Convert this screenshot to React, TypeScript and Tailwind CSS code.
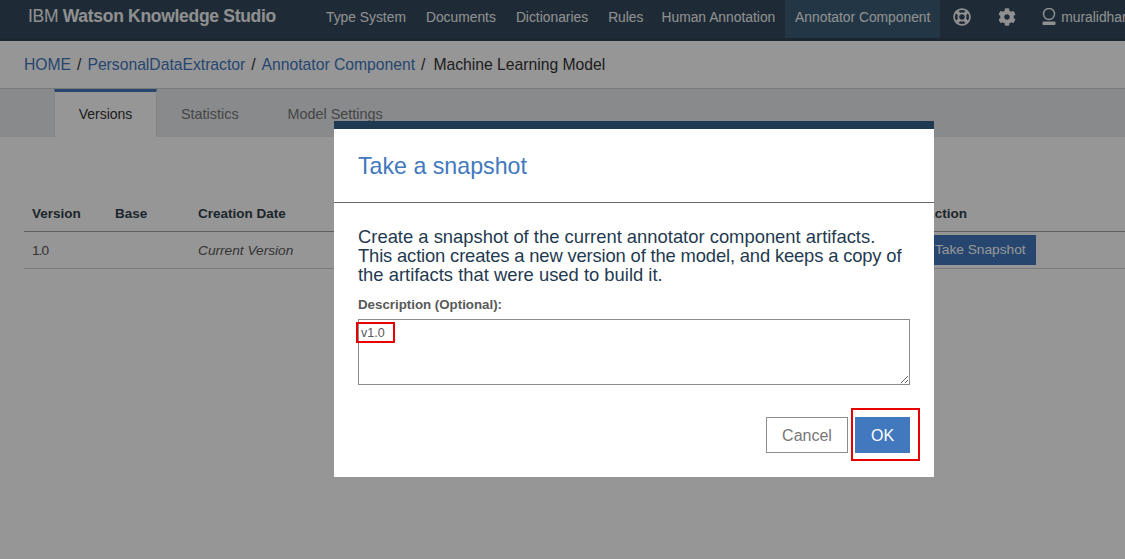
import { FaCog, FaRegLifeRing } from 'react-icons/fa';

const navItems = [
  { label: 'Type System', margin: 'mr-5' },
  { label: 'Documents', margin: 'mr-5' },
  { label: 'Dictionaries', margin: 'mr-5' },
  { label: 'Rules', margin: 'mr-[18px]' },
  { label: 'Human Annotation', margin: 'mr-5' },
];

const font = { fontFamily: '"Liberation Sans", Arial, sans-serif' };

function UserIcon() {
  return (
    <svg width="16" height="18" viewBox="0 0 16 18" fill="none" className="shrink-0">
      <circle cx="8" cy="6" r="5.5" stroke="currentColor" strokeWidth="1.4" />
      <rect x="1.5" y="13.5" width="13" height="3.5" rx="1" fill="currentColor" />
    </svg>
  );
}

export default function App() {
  return (
    <div className="relative h-[559px] w-[1125px] overflow-hidden bg-white" style={font}>
      {/* page behind the dialog */}
      <header className="flex h-[41px] items-start border-b-[3px] border-[#2e4250] bg-[#334a5c] pl-7 text-[#f5f5f5]">
        <div className="mt-[6px] w-[298px] shrink-0 text-[17.5px] leading-[20px] tracking-[-0.3px]">
          <span className="font-light">IBM </span>
          <span className="font-bold">Watson Knowledge Studio</span>
        </div>
        <nav className="flex h-[38px] shrink-0 items-center pb-1 text-[13.84px]">
          {navItems.map((item) => (
            <span key={item.label} className={`${item.margin} whitespace-nowrap`}>{item.label}</span>
          ))}
          <span className="-ml-[10px] flex h-[38px] w-[155px] items-center justify-center self-start whitespace-nowrap bg-[#3b5d78] pb-1">Annotator Component</span>
          <FaRegLifeRing size={18} className="ml-[13px] shrink-0" />
          <FaCog size={18} className="ml-[27px] shrink-0" />
          <span className="ml-[25px] flex items-center gap-1 whitespace-nowrap">
            <UserIcon />
            muralidhar
          </span>
        </nav>
      </header>

      <div className="flex h-[48px] items-center border-b border-[#d0d0d0] pl-6 text-[15.7px] text-[#333333]">
        <span className="text-[#4178be]">HOME</span>
        <span className="mx-[6px]">/</span>
        <span className="text-[#4178be]">PersonalDataExtractor</span>
        <span className="mx-[6px]">/</span>
        <span className="text-[#4178be]">Annotator Component</span>
        <span className="ml-[6px] mr-2">/</span>
        <span>Machine Learning Model</span>
      </div>

      <div className="flex h-[48px] bg-[#e8eaed] pl-[54px] text-[14.4px]">
        <div className="flex h-[48px] w-[103px] items-center justify-center border-x border-t-[3px] border-x-[#dfe1e4] border-t-[#4178be] bg-white text-[14px] text-[#333333]">Versions</div>
        <div className="ml-6 mt-[15px] text-[#777777]">Statistics</div>
        <div className="ml-[49px] mt-[15px] text-[#777777]">Model Settings</div>
      </div>

      <div className="ml-6 mt-[58px] text-[13.7px]">
        <div className="flex h-[37px] items-center border-b border-[#a0a0a0] pt-[2px] text-[13.5px] font-bold text-[#323f4c]">
          <span className="w-[91px] pl-2">Version</span>
          <span className="w-[83px]">Base</span>
          <span className="w-[727px]">Creation Date</span>
          <span>Action</span>
        </div>
        <div className="flex h-[37px] items-center border-b border-[#d0d0d0] text-[#595959]">
          <span className="w-[91px] pl-2 pt-[2px] tracking-[-1px]">1.0</span>
          <span className="w-[83px]" />
          <span className="w-[727px] pt-[2px] italic">Current Version</span>
          <span className="flex h-[30px] items-center whitespace-nowrap bg-[#4178be] px-[10px] text-white">Take Snapshot</span>
        </div>
      </div>

      {/* backdrop */}
      <div className="absolute inset-0 bg-black/[0.41]" />

      {/* dialog */}
      <div className="absolute left-[334px] top-[121px] h-[356px] w-[600px] border-t-[8px] border-[#1f3a50] bg-white">
        <div className="flex h-[74px] items-center border-b border-[#666666] px-6 pt-[2px] text-[23.2px] text-[#4178be]">Take a snapshot</div>
        <div className="px-6 pt-6">
          <p className="whitespace-nowrap text-[18.4px] leading-[19px] text-[#1f3a50]">
            <span className="block">Create a snapshot of the current annotator component artifacts.</span>
            <span className="block tracking-[-0.16px]">This action creates a new version of the model, and keeps a copy of</span>
            <span className="block">the artifacts that were used to build it.</span>
          </p>
          <label className="mt-3 block text-[13.3px] font-bold leading-[18px] text-[#595959]">Description (Optional):</label>
          <textarea
            readOnly
            value="v1.0"
            className="mt-[5px] block h-[66px] w-[552px] border border-[#8c8c8c] px-[2px] py-1 text-[12.5px] leading-[18px] text-[#595959] outline-none"
          />
          <div className="mt-8 flex justify-end gap-[7px]">
            <button className="h-9 w-[82px] border border-[#8c8c8c] bg-white pt-[2px] text-[16px] text-[#777777]">Cancel</button>
            <button className="h-9 w-[55px] bg-[#4178be] pt-[2px] text-[16px] text-white">OK</button>
          </div>
        </div>
      </div>

      {/* red annotation boxes */}
      <div className="absolute left-[356px] top-[322px] h-[21px] w-[39px] border-2 border-[#e60000]" />
      <div className="absolute left-[851px] top-[408px] h-[53px] w-[69px] border-2 border-[#e60000]" />
    </div>
  );
}
